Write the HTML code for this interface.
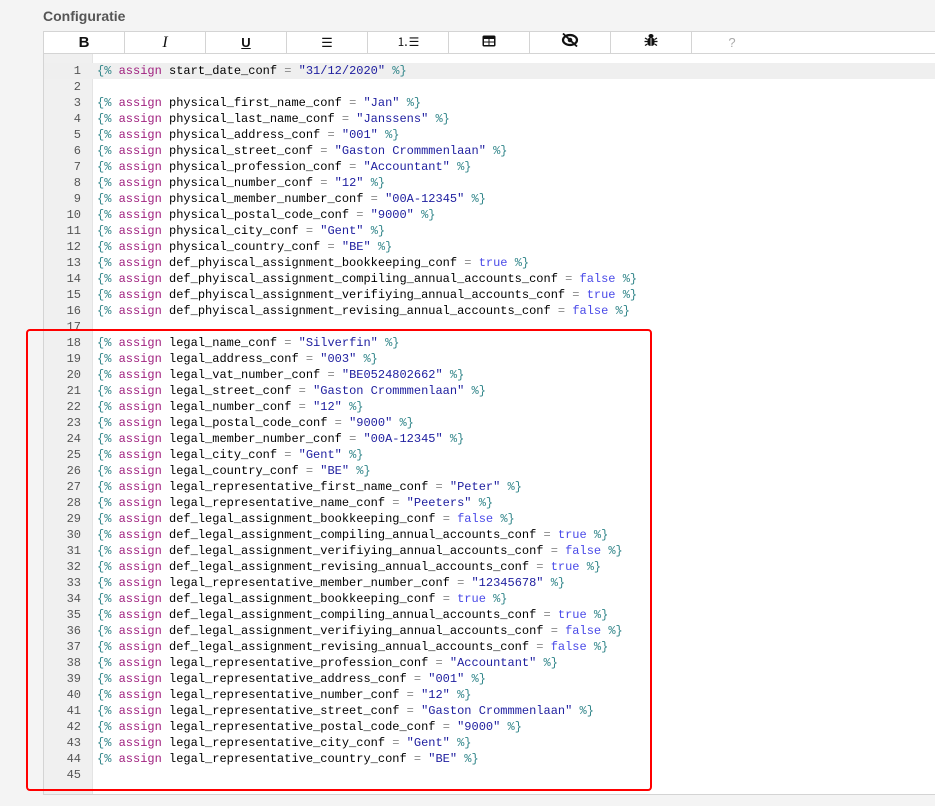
<!DOCTYPE html>
<html><head><meta charset="utf-8"><style>
body{margin:0;width:935px;height:806px;background:#f4f4f4;font-family:"Liberation Sans",sans-serif;position:relative;overflow:hidden}
.title{position:absolute;left:43px;top:8px;font-size:14px;font-weight:bold;color:#555}
.ed{position:absolute;left:43px;top:31px;width:900px;height:762px;background:#fff;border:1px solid #d4d4d4;border-right:none}
.tb{height:21px;border-bottom:1px solid #d4d4d4;display:flex}
.tb div{width:80px;border-right:1px solid #d4d4d4;text-align:center;font-size:13px;line-height:21px;color:#111}
.gut{position:absolute;left:0;top:22px;width:48px;bottom:0;background:#f0f0f0;border-right:1px solid #e4e4e4}
.code{position:absolute;left:0;top:31px;right:0;font-family:"Liberation Mono","DejaVu Sans Mono",monospace;font-size:12px}
.l{height:16px;line-height:16px;white-space:pre;position:relative}
.l i{font-style:normal;position:absolute;left:0;width:37px;text-align:right;color:#555}
.l span.c{position:absolute;left:53px}
.hl{background:#efefef}
.t{color:#32868a}.k{color:#a0207f}.s{color:#2020a0}.b{color:#4a4ae8}.o{color:#888}
.red{position:absolute;left:26px;top:329px;width:622px;height:458px;border:2px solid #f00;border-radius:4px}
</style></head><body>
<div class="title">Configuratie</div>
<div class="ed">
<div class="tb">
<div style="font-weight:bold;font-size:15px">B</div>
<div style="font-style:italic;font-family:'Liberation Serif',serif;font-size:16px">I</div>
<div style="text-decoration:underline;font-weight:bold">U</div>
<div>☰</div>
<div style="font-size:12px">⒈☰</div>
<div><svg width="14" height="12" viewBox="0 0 14 12"><rect x="0.5" y="0.5" width="13" height="11" rx="1.5" fill="#111"/><rect x="2" y="4" width="4.5" height="2.5" fill="#fff"/><rect x="7.5" y="4" width="4.5" height="2.5" fill="#fff"/><rect x="2" y="7.5" width="4.5" height="2.5" fill="#fff"/><rect x="7.5" y="7.5" width="4.5" height="2.5" fill="#fff"/></svg></div>
<div><svg width="18" height="14" viewBox="0 0 18 14"><ellipse cx="9" cy="7" rx="7" ry="5" fill="none" stroke="#111" stroke-width="2.2"/><circle cx="9" cy="7" r="2.3" fill="#111"/><line x1="2" y1="0.5" x2="16" y2="13.5" stroke="#111" stroke-width="1.8"/></svg></div>
<div><svg width="14" height="14" viewBox="0 0 14 14"><ellipse cx="7" cy="3" rx="2.5" ry="2" fill="#111"/><rect x="3.5" y="4.5" width="7" height="8.5" rx="3" fill="#111"/><path d="M1 5l2.5 1.5M13 5l-2.5 1.5M0.5 8.5h3M13.5 8.5h-3M1 12.5l2.5-1.5M13 12.5l-2.5-1.5" stroke="#111" stroke-width="1.3"/><line x1="7" y1="5" x2="7" y2="13" stroke="#fff" stroke-width="0.8"/></svg></div>
<div style="color:#aaa;border-right:none">?</div>
</div>
<div class="gut"></div>
<div class="code">
<div class="l hl"><i>1</i><span class="c"><span class="t">{%</span> <span class="k">assign</span> start_date_conf <span class="o">=</span> <span class="s">"31/12/2020"</span> <span class="t">%}</span></span></div>
<div class="l"><i>2</i></div>
<div class="l"><i>3</i><span class="c"><span class="t">{%</span> <span class="k">assign</span> physical_first_name_conf <span class="o">=</span> <span class="s">"Jan"</span> <span class="t">%}</span></span></div>
<div class="l"><i>4</i><span class="c"><span class="t">{%</span> <span class="k">assign</span> physical_last_name_conf <span class="o">=</span> <span class="s">"Janssens"</span> <span class="t">%}</span></span></div>
<div class="l"><i>5</i><span class="c"><span class="t">{%</span> <span class="k">assign</span> physical_address_conf <span class="o">=</span> <span class="s">"001"</span> <span class="t">%}</span></span></div>
<div class="l"><i>6</i><span class="c"><span class="t">{%</span> <span class="k">assign</span> physical_street_conf <span class="o">=</span> <span class="s">"Gaston Crommmenlaan"</span> <span class="t">%}</span></span></div>
<div class="l"><i>7</i><span class="c"><span class="t">{%</span> <span class="k">assign</span> physical_profession_conf <span class="o">=</span> <span class="s">"Accountant"</span> <span class="t">%}</span></span></div>
<div class="l"><i>8</i><span class="c"><span class="t">{%</span> <span class="k">assign</span> physical_number_conf <span class="o">=</span> <span class="s">"12"</span> <span class="t">%}</span></span></div>
<div class="l"><i>9</i><span class="c"><span class="t">{%</span> <span class="k">assign</span> physical_member_number_conf <span class="o">=</span> <span class="s">"00A-12345"</span> <span class="t">%}</span></span></div>
<div class="l"><i>10</i><span class="c"><span class="t">{%</span> <span class="k">assign</span> physical_postal_code_conf <span class="o">=</span> <span class="s">"9000"</span> <span class="t">%}</span></span></div>
<div class="l"><i>11</i><span class="c"><span class="t">{%</span> <span class="k">assign</span> physical_city_conf <span class="o">=</span> <span class="s">"Gent"</span> <span class="t">%}</span></span></div>
<div class="l"><i>12</i><span class="c"><span class="t">{%</span> <span class="k">assign</span> physical_country_conf <span class="o">=</span> <span class="s">"BE"</span> <span class="t">%}</span></span></div>
<div class="l"><i>13</i><span class="c"><span class="t">{%</span> <span class="k">assign</span> def_phyiscal_assignment_bookkeeping_conf <span class="o">=</span> <span class="b">true</span> <span class="t">%}</span></span></div>
<div class="l"><i>14</i><span class="c"><span class="t">{%</span> <span class="k">assign</span> def_phyiscal_assignment_compiling_annual_accounts_conf <span class="o">=</span> <span class="b">false</span> <span class="t">%}</span></span></div>
<div class="l"><i>15</i><span class="c"><span class="t">{%</span> <span class="k">assign</span> def_phyiscal_assignment_verifiying_annual_accounts_conf <span class="o">=</span> <span class="b">true</span> <span class="t">%}</span></span></div>
<div class="l"><i>16</i><span class="c"><span class="t">{%</span> <span class="k">assign</span> def_phyiscal_assignment_revising_annual_accounts_conf <span class="o">=</span> <span class="b">false</span> <span class="t">%}</span></span></div>
<div class="l"><i>17</i></div>
<div class="l"><i>18</i><span class="c"><span class="t">{%</span> <span class="k">assign</span> legal_name_conf <span class="o">=</span> <span class="s">"Silverfin"</span> <span class="t">%}</span></span></div>
<div class="l"><i>19</i><span class="c"><span class="t">{%</span> <span class="k">assign</span> legal_address_conf <span class="o">=</span> <span class="s">"003"</span> <span class="t">%}</span></span></div>
<div class="l"><i>20</i><span class="c"><span class="t">{%</span> <span class="k">assign</span> legal_vat_number_conf <span class="o">=</span> <span class="s">"BE0524802662"</span> <span class="t">%}</span></span></div>
<div class="l"><i>21</i><span class="c"><span class="t">{%</span> <span class="k">assign</span> legal_street_conf <span class="o">=</span> <span class="s">"Gaston Crommmenlaan"</span> <span class="t">%}</span></span></div>
<div class="l"><i>22</i><span class="c"><span class="t">{%</span> <span class="k">assign</span> legal_number_conf <span class="o">=</span> <span class="s">"12"</span> <span class="t">%}</span></span></div>
<div class="l"><i>23</i><span class="c"><span class="t">{%</span> <span class="k">assign</span> legal_postal_code_conf <span class="o">=</span> <span class="s">"9000"</span> <span class="t">%}</span></span></div>
<div class="l"><i>24</i><span class="c"><span class="t">{%</span> <span class="k">assign</span> legal_member_number_conf <span class="o">=</span> <span class="s">"00A-12345"</span> <span class="t">%}</span></span></div>
<div class="l"><i>25</i><span class="c"><span class="t">{%</span> <span class="k">assign</span> legal_city_conf <span class="o">=</span> <span class="s">"Gent"</span> <span class="t">%}</span></span></div>
<div class="l"><i>26</i><span class="c"><span class="t">{%</span> <span class="k">assign</span> legal_country_conf <span class="o">=</span> <span class="s">"BE"</span> <span class="t">%}</span></span></div>
<div class="l"><i>27</i><span class="c"><span class="t">{%</span> <span class="k">assign</span> legal_representative_first_name_conf <span class="o">=</span> <span class="s">"Peter"</span> <span class="t">%}</span></span></div>
<div class="l"><i>28</i><span class="c"><span class="t">{%</span> <span class="k">assign</span> legal_representative_name_conf <span class="o">=</span> <span class="s">"Peeters"</span> <span class="t">%}</span></span></div>
<div class="l"><i>29</i><span class="c"><span class="t">{%</span> <span class="k">assign</span> def_legal_assignment_bookkeeping_conf <span class="o">=</span> <span class="b">false</span> <span class="t">%}</span></span></div>
<div class="l"><i>30</i><span class="c"><span class="t">{%</span> <span class="k">assign</span> def_legal_assignment_compiling_annual_accounts_conf <span class="o">=</span> <span class="b">true</span> <span class="t">%}</span></span></div>
<div class="l"><i>31</i><span class="c"><span class="t">{%</span> <span class="k">assign</span> def_legal_assignment_verifiying_annual_accounts_conf <span class="o">=</span> <span class="b">false</span> <span class="t">%}</span></span></div>
<div class="l"><i>32</i><span class="c"><span class="t">{%</span> <span class="k">assign</span> def_legal_assignment_revising_annual_accounts_conf <span class="o">=</span> <span class="b">true</span> <span class="t">%}</span></span></div>
<div class="l"><i>33</i><span class="c"><span class="t">{%</span> <span class="k">assign</span> legal_representative_member_number_conf <span class="o">=</span> <span class="s">"12345678"</span> <span class="t">%}</span></span></div>
<div class="l"><i>34</i><span class="c"><span class="t">{%</span> <span class="k">assign</span> def_legal_assignment_bookkeeping_conf <span class="o">=</span> <span class="b">true</span> <span class="t">%}</span></span></div>
<div class="l"><i>35</i><span class="c"><span class="t">{%</span> <span class="k">assign</span> def_legal_assignment_compiling_annual_accounts_conf <span class="o">=</span> <span class="b">true</span> <span class="t">%}</span></span></div>
<div class="l"><i>36</i><span class="c"><span class="t">{%</span> <span class="k">assign</span> def_legal_assignment_verifiying_annual_accounts_conf <span class="o">=</span> <span class="b">false</span> <span class="t">%}</span></span></div>
<div class="l"><i>37</i><span class="c"><span class="t">{%</span> <span class="k">assign</span> def_legal_assignment_revising_annual_accounts_conf <span class="o">=</span> <span class="b">false</span> <span class="t">%}</span></span></div>
<div class="l"><i>38</i><span class="c"><span class="t">{%</span> <span class="k">assign</span> legal_representative_profession_conf <span class="o">=</span> <span class="s">"Accountant"</span> <span class="t">%}</span></span></div>
<div class="l"><i>39</i><span class="c"><span class="t">{%</span> <span class="k">assign</span> legal_representative_address_conf <span class="o">=</span> <span class="s">"001"</span> <span class="t">%}</span></span></div>
<div class="l"><i>40</i><span class="c"><span class="t">{%</span> <span class="k">assign</span> legal_representative_number_conf <span class="o">=</span> <span class="s">"12"</span> <span class="t">%}</span></span></div>
<div class="l"><i>41</i><span class="c"><span class="t">{%</span> <span class="k">assign</span> legal_representative_street_conf <span class="o">=</span> <span class="s">"Gaston Crommmenlaan"</span> <span class="t">%}</span></span></div>
<div class="l"><i>42</i><span class="c"><span class="t">{%</span> <span class="k">assign</span> legal_representative_postal_code_conf <span class="o">=</span> <span class="s">"9000"</span> <span class="t">%}</span></span></div>
<div class="l"><i>43</i><span class="c"><span class="t">{%</span> <span class="k">assign</span> legal_representative_city_conf <span class="o">=</span> <span class="s">"Gent"</span> <span class="t">%}</span></span></div>
<div class="l"><i>44</i><span class="c"><span class="t">{%</span> <span class="k">assign</span> legal_representative_country_conf <span class="o">=</span> <span class="s">"BE"</span> <span class="t">%}</span></span></div>
<div class="l"><i>45</i></div>
</div>
</div>
<div class="red"></div>
</body></html>
